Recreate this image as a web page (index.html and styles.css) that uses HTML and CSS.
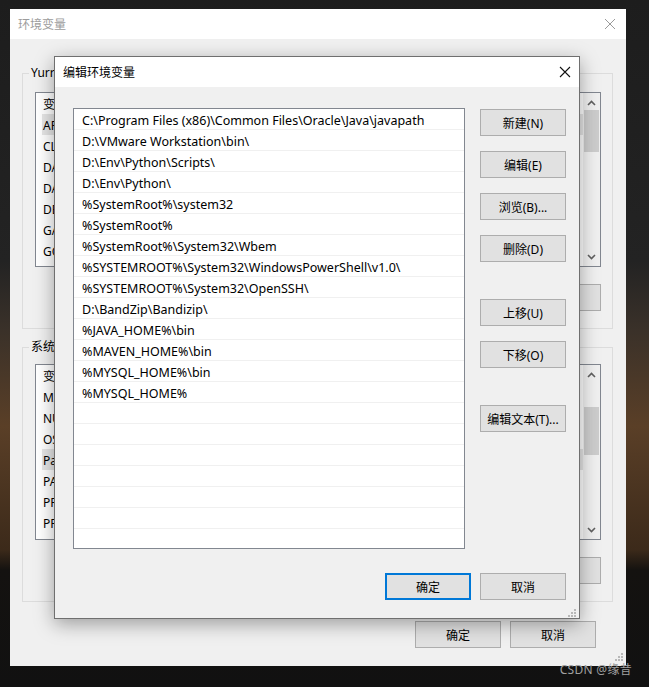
FILE: index.html
```html
<!DOCTYPE html>
<html lang="zh-CN">
<head>
    <meta charset="UTF-8">
    <title>编辑环境变量</title>
    <link rel="stylesheet" href="styles.css">
</head>
<body>
    <div class="desktop">

        <!-- ventana de fondo: Variables de entorno -->
        <div class="win win-back">
            <div class="titlebar back-title">
                <span>环境变量</span>
                <svg class="close" width="12" height="12" viewBox="0 0 12 12"><path d="M1 1 L11 11 M11 1 L1 11" stroke="#9a9a9a" stroke-width="1"/></svg>
            </div>
            <div class="back-body">
                <fieldset class="group group-user">
                    <legend>Yurrr 的用户变量(U)</legend>
                    <div class="lv">
                        <div class="lv-rows">
                            <div class="lv-row lv-head">变量</div>
                            <div class="lv-row sel">APPDATA</div>
                            <div class="lv-row">CLASSPATH</div>
                            <div class="lv-row">DATA_HOME</div>
                            <div class="lv-row">DATAGRIP</div>
                            <div class="lv-row">DEVECO</div>
                            <div class="lv-row">GATEWAY</div>
                            <div class="lv-row">GOLAND</div>
                        </div>
                        <div class="vscroll">
                            <svg class="arrow" width="9" height="6" viewBox="0 0 9 6"><path d="M1 5 L4.5 1.5 L8 5" fill="none" stroke="#606060" stroke-width="1.6"/></svg>
                            <div class="track"><div class="thumb thumb-user"></div></div>
                            <svg class="arrow" width="9" height="6" viewBox="0 0 9 6"><path d="M1 1 L4.5 4.5 L8 1" fill="none" stroke="#606060" stroke-width="1.6"/></svg>
                        </div>
                    </div>
                    <div class="btn-row">
                        <button class="btn">新建(N)...</button>
                        <button class="btn">编辑(E)...</button>
                        <button class="btn">删除(D)</button>
                    </div>
                </fieldset>

                <fieldset class="group group-sys">
                    <legend>系统变量(S)</legend>
                    <div class="lv">
                        <div class="lv-rows">
                            <div class="lv-row lv-head">变量</div>
                            <div class="lv-row">MAVEN_HOME</div>
                            <div class="lv-row">NUMBER_OF_PROCESSORS</div>
                            <div class="lv-row">OS</div>
                            <div class="lv-row sel">Path</div>
                            <div class="lv-row">PATHEXT</div>
                            <div class="lv-row">PROCESSOR_ARCHITECTURE</div>
                            <div class="lv-row">PROCESSOR_IDENTIFIER</div>
                        </div>
                        <div class="vscroll">
                            <svg class="arrow" width="9" height="6" viewBox="0 0 9 6"><path d="M1 5 L4.5 1.5 L8 5" fill="none" stroke="#606060" stroke-width="1.6"/></svg>
                            <div class="track"><div class="thumb thumb-sys"></div></div>
                            <svg class="arrow" width="9" height="6" viewBox="0 0 9 6"><path d="M1 1 L4.5 4.5 L8 1" fill="none" stroke="#606060" stroke-width="1.6"/></svg>
                        </div>
                    </div>
                    <div class="btn-row">
                        <button class="btn">新建(W)...</button>
                        <button class="btn">编辑(I)...</button>
                        <button class="btn">删除(L)</button>
                    </div>
                </fieldset>

                <div class="dlg-buttons back-buttons">
                    <button class="btn">确定</button>
                    <button class="btn">取消</button>
                </div>
                <svg class="grip grip-back" width="8" height="8" viewBox="0 0 8 8" fill="#b8b8b8"><rect x="6" y="0" width="2" height="2"/><rect x="3" y="3" width="2" height="2"/><rect x="6" y="3" width="2" height="2"/><rect x="0" y="6" width="2" height="2"/><rect x="3" y="6" width="2" height="2"/><rect x="6" y="6" width="2" height="2"/></svg>
            </div>
        </div>

        <!-- ventana delante: Editar variable de entorno -->
        <div class="win win-front">
            <div class="titlebar front-title">
                <span>编辑环境变量</span>
                <svg class="close" width="12" height="12" viewBox="0 0 12 12"><path d="M1 1 L11 11 M11 1 L1 11" stroke="#111" stroke-width="1.1"/></svg>
            </div>
            <div class="front-body">
                <div class="front-main">
                    <div class="path-list">
                        <div class="path-row">C:\Program Files (x86)\Common Files\Oracle\Java\javapath</div>
                        <div class="path-row">D:\VMware Workstation\bin\</div>
                        <div class="path-row">D:\Env\Python\Scripts\</div>
                        <div class="path-row">D:\Env\Python\</div>
                        <div class="path-row">%SystemRoot%\system32</div>
                        <div class="path-row">%SystemRoot%</div>
                        <div class="path-row">%SystemRoot%\System32\Wbem</div>
                        <div class="path-row">%SYSTEMROOT%\System32\WindowsPowerShell\v1.0\</div>
                        <div class="path-row">%SYSTEMROOT%\System32\OpenSSH\</div>
                        <div class="path-row">D:\BandZip\Bandizip\</div>
                        <div class="path-row">%JAVA_HOME%\bin</div>
                        <div class="path-row">%MAVEN_HOME%\bin</div>
                        <div class="path-row">%MYSQL_HOME%\bin</div>
                        <div class="path-row">%MYSQL_HOME%</div>
                        <div class="path-row"></div>
                        <div class="path-row"></div>
                        <div class="path-row"></div>
                        <div class="path-row"></div>
                        <div class="path-row"></div>
                        <div class="path-row"></div>
                        <div class="path-row"></div>
                    </div>
                    <div class="side-buttons">
                        <button class="btn">新建(N)</button>
                        <button class="btn">编辑(E)</button>
                        <button class="btn">浏览(B)...</button>
                        <button class="btn">删除(D)</button>
                        <button class="btn far">上移(U)</button>
                        <button class="btn">下移(O)</button>
                        <button class="btn far">编辑文本(T)...</button>
                    </div>
                </div>
                <div class="dlg-buttons front-buttons">
                    <button class="btn default">确定</button>
                    <button class="btn">取消</button>
                </div>
                <svg class="grip grip-front" width="8" height="8" viewBox="0 0 8 8" fill="#b8b8b8"><rect x="6" y="0" width="2" height="2"/><rect x="3" y="3" width="2" height="2"/><rect x="6" y="3" width="2" height="2"/><rect x="0" y="6" width="2" height="2"/><rect x="3" y="6" width="2" height="2"/><rect x="6" y="6" width="2" height="2"/></svg>
            </div>
        </div>

        <div class="watermark">CSDN @缘昔</div>
    </div>
</body>
</html>
```

FILE: styles.css
```css
* {
    box-sizing: border-box;
}
body {
    margin: 0;
    font-family: "Noto Sans", "Noto Sans CJK SC", sans-serif;
    font-size: 12px;
    color: #000;
}
.desktop {
    position: relative;
    width: 649px;
    height: 687px;
    overflow: hidden;
    background: linear-gradient(180deg, #1d1d1d 0%, #232323 38%, #3a3129 48%, #5a3f27 62%, #3c2a1a 80%, #141210 83%, #111 100%);
}
.win {
    position: absolute;
}
.titlebar {
    display: flex;
    align-items: center;
    justify-content: space-between;
    height: 30px;
    background: #fff;
    padding-left: 8px;
}
.close {
    display: block;
}

/* ventana de fondo */
.win-back {
    left: 10px;
    top: 9px;
    width: 616px;
    height: 657px;
    background: #f0f0f0;
}
.back-title {
    color: #9c9c9c;
    padding-right: 10px;
}
.back-body {
    position: relative;
    padding: 26px 13px 0 12px;
}
.group {
    margin: 0;
    padding: 11px 11px 17px 12px;
    border: 1px solid #dcdcdc;
    min-width: 0;
}
.group legend {
    margin-left: -6px;
    padding: 0 2px;
    line-height: 16px;
    height: 16px;
}
.group-sys {
    margin-top: 10px;
    padding-top: 9px;
}
.lv {
    display: flex;
    height: 175px;
    border: 1px solid #828790;
    background: #fff;
}
.group-sys .lv {
    height: 176px;
}
.lv-rows {
    flex: 1;
    padding-left: 6px;
}
.lv-row {
    height: 21px;
    line-height: 24px;
    padding-left: 1px;
}
.lv-row.sel {
    background: #e5e5e5;
}
.vscroll {
    width: 17px;
    display: flex;
    flex-direction: column;
    align-items: center;
    background: #f0f0f0;
    padding: 7px 0 6px;
}
.track {
    flex: 1;
    width: 100%;
    padding: 0 1px;
}
.thumb {
    background: #cdcdcd;
    width: 100%;
}
.thumb-user {
    margin-top: 4px;
    height: 42px;
}
.thumb-sys {
    margin-top: 29px;
    height: 48px;
}
.btn-row {
    display: flex;
    justify-content: flex-end;
    gap: 9px;
    margin-top: 17px;
}
.back-buttons {
    margin-top: 19px;
    padding-right: 17px;
}
.grip {
    position: absolute;
    display: block;
}
.grip-back {
    right: 3px;
    bottom: -13px;
}

/* botones */
.btn {
    display: block;
    width: 86px;
    height: 27px;
    padding: 1px 0 0;
    font-family: "Noto Sans", "Noto Sans CJK SC", sans-serif;
    font-size: 12px;
    color: #000;
    background: #e1e1e1;
    border: 1px solid #adadad;
}
.btn.default {
    border: 2px solid #0078d7;
}
.dlg-buttons {
    display: flex;
    justify-content: flex-end;
    gap: 9px;
}

/* ventana delante */
.win-front {
    left: 54px;
    top: 56px;
    width: 526px;
    height: 563px;
    border: 1px solid #6f6f6f;
    background: #f0f0f0;
    box-shadow: 0 5px 18px rgba(0, 0, 0, 0.35);
}
.front-title {
    padding-right: 8px;
}
.front-body {
    position: relative;
    padding: 21px 13px 0 18px;
}
.front-main {
    display: flex;
    gap: 15px;
}
.path-list {
    width: 392px;
    height: 441px;
    border: 1px solid #828790;
    background: #fff;
    overflow: hidden;
}
.path-row {
    height: 21px;
    line-height: 24px;
    padding-left: 8px;
    font-size: 12.5px;
    border-bottom: 1px solid #f0f0f0;
    white-space: nowrap;
}
.side-buttons {
    display: flex;
    flex-direction: column;
    gap: 15px;
    padding-top: 1px;
}
.side-buttons .far {
    margin-top: 22px;
}
.front-buttons {
    margin-top: 24px;
}
.grip-front {
    right: 3px;
    bottom: -17px;
}

.watermark {
    position: absolute;
    right: 17px;
    bottom: 9px;
    color: #a0a0a0;
    font-size: 12px;
    letter-spacing: 0.3px;
}
```
